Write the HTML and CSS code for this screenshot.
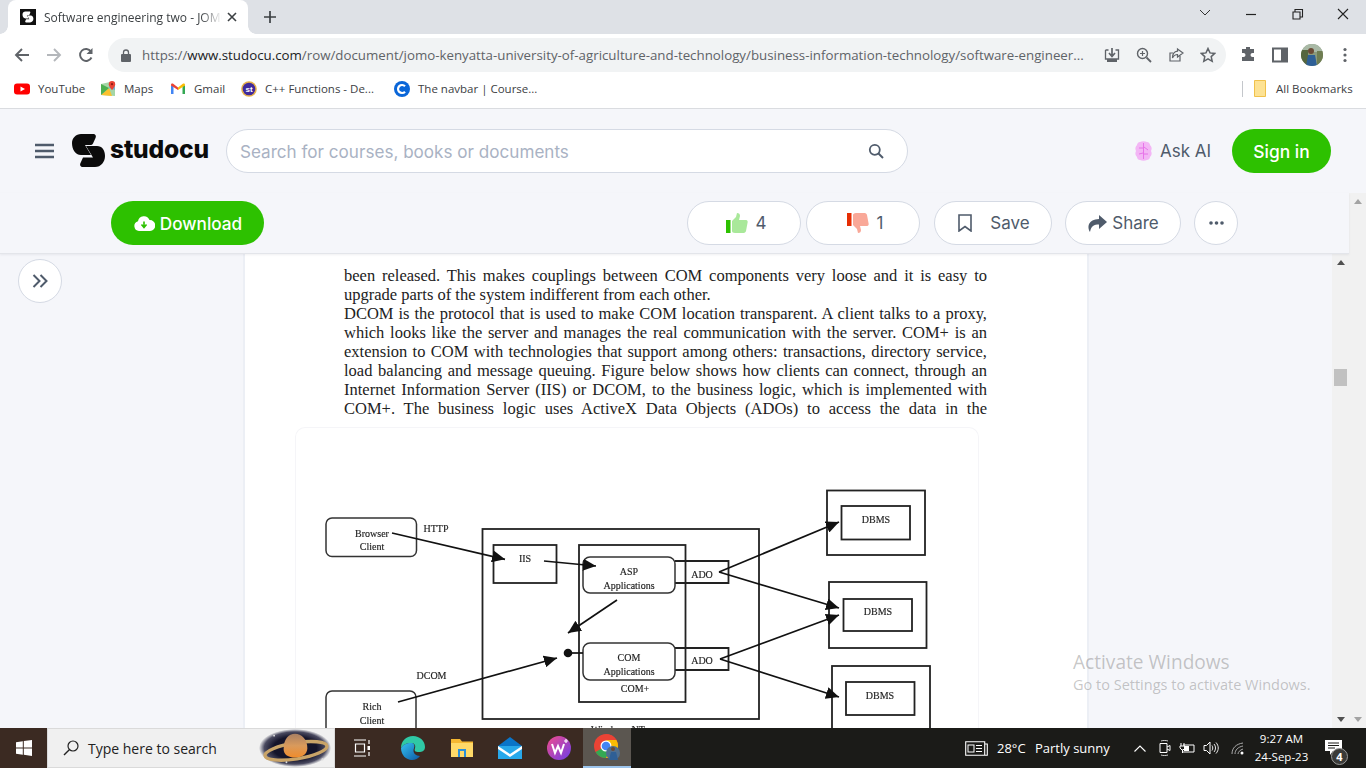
FILE: index.html
```html
<!DOCTYPE html>
<html lang="en">
<head>
<meta charset="utf-8">
<title>Software engineering two</title>
<link rel="stylesheet" href="styles.css">
</head>
<body>
<div class="screen">
  <div class="tabstrip">
    <div class="tab">
      <svg class="favicon" viewBox="0 0 16 16"><rect width="16" height="16" fill="#111"/><g transform="translate(2.500 2.500) scale(.33)"><path d="M9 0h12c2.500 0 3.500 2 2.500 4L21 9.500c-.6 1-1.500 1.500-3 1.500h-5l6 10H9C3 21 0 15 0 9c0-5 4-9 9-9z" fill="#fff"/><path d="M14 12h11c5 0 8 4 8 10 0 6-4 11-10 11H11c-2.500 0-3.500-2-2.500-4l2.500-5.500h10z" fill="#fff"/></g></svg>
      <span class="tab-title">Software engineering two - JOMO Kenyatta</span>
      <svg class="tab-x" viewBox="0 0 10 10"><path d="M1 1l8 8M9 1l-8 8" stroke="#3c4043" stroke-width="1.6"/></svg>
    </div>
    <svg class="newtab" viewBox="0 0 12 12"><path d="M6 0v12M0 6h12" stroke="#3c4043" stroke-width="1.7"/></svg>
    <div class="wincontrols">
      <svg class="winbtn" viewBox="0 0 46 28"><path d="M18 10l5 5 5-5" fill="none" stroke="#333" stroke-width="1"/></svg>
      <svg class="winbtn" viewBox="0 0 46 28"><path d="M18 14.5h10" stroke="#222" stroke-width="1.2"/></svg>
      <svg class="winbtn" viewBox="0 0 46 28"><path d="M19 12h7v7h-7zM21 12V9.500h7.500V17H26" fill="none" stroke="#222" stroke-width="1.1"/></svg>
      <svg class="winbtn" viewBox="0 0 46 28"><path d="M18 9l10 10M28 9L18 19" stroke="#222" stroke-width="1.1"/></svg>
    </div>
  </div>

  <div class="toolbar">
    <svg class="navicon" viewBox="0 0 16 16"><path d="M15 8H2M8 2L2 8l6 6" fill="none" stroke="#5f6368" stroke-width="1.9"/></svg>
    <svg class="navicon" viewBox="0 0 16 16"><path d="M1 8h13M8 2l6 6-6 6" fill="none" stroke="#b4b7bb" stroke-width="1.9"/></svg>
    <svg class="navicon" viewBox="0 0 16 16"><path d="M13.500 10.500A6 6 0 1 1 13 4.500" fill="none" stroke="#5f6368" stroke-width="1.9"/><path d="M14.500 1v6h-6z" fill="#5f6368"/></svg>
    <div class="omnibox">
      <svg class="lock" viewBox="0 0 10 13"><path d="M2.500 5V3.500a2.500 2.500 0 0 1 5 0V5" fill="none" stroke="#5f6368" stroke-width="1.300"/><rect y="5" width="10" height="8" rx="1" fill="#5f6368"/></svg>
      <span class="url">https://<b>www.studocu.com</b>/row/document/jomo-kenyatta-university-of-agriculture-and-technology/business-information-technology/software-engineer...</span>
      <svg class="omni-icon" viewBox="0 0 16 16"><path d="M1.500 3v9h13V3h-3M4.500 3h-3" fill="none" stroke="#5f6368" stroke-width="1.300"/><path d="M8 1v7M5 6l3 3.500L11 6" fill="none" stroke="#5f6368" stroke-width="1.700"/><rect x="3" y="12" width="10" height="3" fill="#5f6368"/></svg>
      <svg class="omni-icon" viewBox="0 0 16 16"><circle cx="6.500" cy="6.500" r="5" fill="none" stroke="#5f6368" stroke-width="1.400"/><path d="M10.500 10.500L15 15" stroke="#5f6368" stroke-width="1.800"/><path d="M6.500 4v5M4 6.500h5" stroke="#5f6368" stroke-width="1.200"/></svg>
      <svg class="omni-icon" viewBox="0 0 16 16"><path d="M12 9v5H2V6h3" fill="none" stroke="#5f6368" stroke-width="1.200"/><path d="M9.500 2L15 6l-5.500 4V7.500C7 7.500 5.500 9 4.500 11c0-4 2-6.500 5-6.800z" fill="none" stroke="#5f6368" stroke-width="1.200"/></svg>
      <svg class="omni-icon" viewBox="0 0 16 16"><path d="M8 1.500l2 4.400 4.800.5-3.600 3.200 1 4.700L8 11.900l-4.200 2.400 1-4.700L1.200 6.400 6 5.900z" fill="none" stroke="#5f6368" stroke-width="1.500"/></svg>
    </div>
    <div class="toolbar-right">
      <svg class="tool-icon" viewBox="0 0 16 16"><path d="M6 1.500a2 2 0 0 1 4 0V3h4v4h-1.500a2 2 0 0 0 0 4H14v4H2v-4h1.500a2 2 0 0 0 0-4H2V3h4z" fill="#5f6368" transform="translate(0 -1)"/></svg>
      <svg class="tool-icon" viewBox="0 0 16 16"><path d="M1 1.500h14v13H1z" fill="none" stroke="#5f6368" stroke-width="2"/><rect x="9" y="2" width="6" height="12" fill="#5f6368"/></svg>
      <svg class="avatar" viewBox="0 0 22 22"><defs><clipPath id="av"><circle cx="11" cy="11" r="11"/></clipPath></defs><g clip-path="url(#av)"><rect width="22" height="22" fill="#8b9a7c"/><rect y="0" width="22" height="8" fill="#a9b9a6"/><rect x="0" y="6" width="7" height="16" fill="#55663f"/><rect x="16" y="7" width="6" height="15" fill="#6f7d52"/><circle cx="10" cy="7" r="3" fill="#6b4a36"/><path d="M5 22l2-11h7l2 11z" fill="#2e5f96"/></g></svg>
      <svg class="tool-icon" viewBox="0 0 16 16"><circle cx="8" cy="2.500" r="1.600" fill="#5f6368"/><circle cx="8" cy="8" r="1.600" fill="#5f6368"/><circle cx="8" cy="13.500" r="1.600" fill="#5f6368"/></svg>
    </div>
  </div>

  <div class="bookmarks">
    <a class="bm bm-yt"><svg class="bm-icon" viewBox="0 0 16 16"><rect y="2.500" width="16" height="11" rx="3" fill="#f00"/><path d="M6.500 5.500v5L11 8z" fill="#fff"/></svg>YouTube</a>
    <a class="bm bm-maps"><svg class="bm-icon" viewBox="0 0 16 16"><path d="M1 3l9-2 5 2v12l-14-1z" fill="#a5d6a7"/><path d="M1 14L9 7l3 8z" fill="#fbc02d"/><path d="M1 3l8 4-8 7z" fill="#4caf50"/><path d="M9 7l2-6 4 2v6z" fill="#4285f4" opacity=".5"/><path d="M12 0a3.200 3.200 0 0 1 3.200 3.200C15.200 5.500 12 9 12 9S8.800 5.500 8.800 3.200A3.200 3.200 0 0 1 12 0z" fill="#ea4335"/><circle cx="12" cy="3.200" r="1.100" fill="#8e1c14"/></svg>Maps</a>
    <a class="bm bm-gmail"><svg class="bm-icon" viewBox="0 0 16 16"><path d="M1 13V4l2.500 1.500V13z" fill="#4285f4"/><path d="M15 13V4l-2.500 1.500V13z" fill="#34a853"/><path d="M1 4c0-1.500 1.500-1.800 2.500-1L8 6.500 8 9 1 4.500z" fill="#ea4335"/><path d="M15 4c0-1.500-1.500-1.800-2.500-1L8 6.500V9l7-4.500z" fill="#fbbc04"/></svg>Gmail</a>
    <a class="bm bm-st"><svg class="bm-icon" viewBox="0 0 16 16"><circle cx="8" cy="8" r="7.800" fill="#e5b04a"/><circle cx="8" cy="8" r="6.300" fill="#3f2a9c"/><text x="8" y="11" class="st-text">st</text></svg>C++ Functions - De...</a>
    <a class="bm bm-c"><svg class="bm-icon" viewBox="0 0 16 16"><circle cx="8" cy="8" r="8" fill="#0a66d8"/><path d="M11 5.300A4 4 0 1 0 11 10.700" fill="none" stroke="#fff" stroke-width="2.200"/></svg>The navbar | Course...</a>
    <span class="bm-sep"></span>
    <a class="bm bm-all"><svg class="bm-folder" viewBox="0 0 12 17"><path d="M.5.500h11v16H.5z" fill="#fde293" stroke="#f0c14b"/></svg>All Bookmarks</a>
  </div>

  <div class="site">
    <header class="topnav">
      <svg class="burger" viewBox="0 0 19 16"><path d="M0 2h19M0 8h19M0 14h19" stroke="#4f5b6b" stroke-width="2.600"/></svg>
      <svg class="logo-mark" viewBox="0 0 33 33"><path d="M9 0h12c2.500 0 3.500 2 2.500 4L21 9.500c-.6 1-1.500 1.500-3 1.500h-5l6 10H9C3 21 0 15 0 9c0-5 4-9 9-9z" fill="#0b0b0b"/><path d="M14 12h11c5 0 8 4 8 10 0 6-4 11-10 11H11c-2.500 0-3.500-2-2.500-4l2.500-5.500h10z" fill="#0b0b0b"/></svg>
      <span class="logo-word">studocu</span>
      <div class="search">
        <span class="search-ph">Search for courses, books or documents</span>
        <svg class="search-ico" viewBox="0 0 16 16"><circle cx="6.800" cy="6.800" r="5" fill="none" stroke="#4f5b6b" stroke-width="1.800"/><path d="M10.500 10.500L15 15" stroke="#4f5b6b" stroke-width="2"/></svg>
      </div>
      <svg class="askai-ico" viewBox="0 0 17 20"><path d="M5 1c2-1 5-1 7 0 2 0 3 2 3 3 2 2 2 4 1 6 1 2 1 4-1 6 0 2-2 3-3 3-2 1-5 1-7 0-2 0-3-2-3-3-2-2-2-4-1-6-1-2-1-4 1-6 0-1 1-3 3-3z" fill="#f3b6f5"/><path d="M8.500 2v16M4 7h4M9 6l4 3M4 13l4-1M9 13h4" stroke="#e56ce8" stroke-width=".9" fill="none"/></svg>
      <span class="askai">Ask AI</span>
      <a class="signin">Sign in</a>
    </header>

    <div class="below">
      <div class="main">
        <div class="actionbar">
          <a class="download">
            <svg class="dl-ico" viewBox="0 0 22 15"><path d="M6 15a5 5 0 0 1-1-9.800A6 6 0 0 1 16.500 4 5.500 5.500 0 0 1 17 15z" fill="#fff"/><path d="M11 5.500v5M8.500 8.500L11 11.500l2.500-3" fill="none" stroke="#2dc100" stroke-width="1.600"/></svg>
            Download
          </a>
          <div class="actions">
            <a class="pill pill-vote">
              <svg class="vote-ico" viewBox="0 0 22 20"><rect x="0" y="7" width="4.500" height="13" fill="#2dc100"/><path d="M6 8l4-4 1-4c2 0 3 1 3 3l-1 4h7c1.500 0 2 1.500 1.500 3L20 18c-.5 1.500-1.500 2-3 2H9c-2 0-3-1-3-2z" fill="#a9e89a"/></svg>
              <span>4</span>
            </a>
            <a class="pill pill-vote">
              <svg class="vote-ico" viewBox="0 0 22 20"><rect x="0" y="0" width="4.500" height="13" fill="#e62e04"/><path d="M6 12l4 4 1 4c2 0 3-1 3-3l-1-4h7c1.500 0 2-1.500 1.500-3L20 2c-.5-1.500-1.500-2-3-2H9C7 0 6 1 6 2z" fill="#f9a898"/></svg>
              <span>1</span>
            </a>
            <a class="pill pill-save">
              <svg class="save-ico" viewBox="0 0 14 18"><path d="M1 1h12v16l-6-4.500L1 17z" fill="none" stroke="#4f5b6b" stroke-width="1.600"/></svg>
              <span>Save</span>
            </a>
            <a class="pill pill-share">
              <svg class="share-ico" viewBox="0 0 20 17"><path d="M12 0l8 7-8 7V9.500C7 9.500 4 11 3 17 0 12 1 4.500 12 4z" fill="#4f5b6b"/></svg>
              <span>Share</span>
            </a>
            <a class="pill pill-more"><svg class="more-ico" viewBox="0 0 15 4"><circle cx="2" cy="2" r="1.800" fill="#4f5b6b"/><circle cx="7.500" cy="2" r="1.800" fill="#4f5b6b"/><circle cx="13" cy="2" r="1.800" fill="#4f5b6b"/></svg></a>
          </div>
        </div>

        <div class="viewer">
          <aside class="side">
            <a class="expand"><svg class="expand-ico" viewBox="0 0 16 14"><path d="M1.500 1l6 6-6 6M8.500 1l6 6-6 6" fill="none" stroke="#4f5b6b" stroke-width="2"/></svg></a>
          </aside>
          <article class="page">
            <div class="doc">
              <p class="ln">been released. This makes couplings between COM components very loose and it is easy to</p>
              <p class="ln ln-end">upgrade parts of the system indifferent from each other.</p>
              <p class="ln">DCOM is the protocol that is used to make COM location transparent. A client talks to a proxy,</p>
              <p class="ln">which looks like the server and manages the real communication with the server. COM+ is an</p>
              <p class="ln">extension to COM with technologies that support among others: transactions, directory service,</p>
              <p class="ln">load balancing and message queuing. Figure below shows how clients can connect, through an</p>
              <p class="ln">Internet Information Server (IIS) or DCOM, to the business logic, which is implemented with</p>
              <p class="ln">COM+. The business logic uses ActiveX Data Objects (ADOs) to access the data in the</p>
            </div>
            <figure class="figure">
              <svg class="diagram" viewBox="295 427 684 310">
                <defs>
                  <marker id="ah" markerUnits="userSpaceOnUse" markerWidth="13" markerHeight="12" refX="13" refY="6" orient="auto"><path d="M0 0L13 6 0 12z" fill="#111"/></marker>
                </defs>
                <g class="box">
                  <rect class="soft" x="326" y="518" width="90.500" height="38.500" rx="6"/>
                  <rect class="soft" x="326" y="691" width="90" height="45" rx="6"/>
                  <rect x="482.500" y="529" width="276.500" height="190"/>
                  <rect x="493.500" y="545" width="63" height="38"/>
                  <rect x="579" y="545" width="106.500" height="157"/>
                  <path d="M675 561h53.500v22H675M675 648h53.500v22H675"/>
                  <rect class="soft" x="583" y="557" width="92" height="36" rx="7"/>
                  <rect class="soft" x="583" y="643" width="92" height="37" rx="7"/>
                  <rect x="827" y="490.500" width="98" height="64.500"/>
                  <rect x="841.500" y="506" width="68.500" height="33.500"/>
                  <rect x="829" y="582" width="97.500" height="66"/>
                  <rect x="843.500" y="599" width="68.500" height="32"/>
                  <rect x="832" y="666" width="98" height="80"/>
                  <rect x="846" y="682" width="68.500" height="33"/>
                </g>
                <g class="arrow">
                  <path d="M392 533L505 559.300" marker-end="url(#ah)"/>
                  <path d="M544 561L596 566" marker-end="url(#ah)"/>
                  <path d="M617 600L568 633" marker-end="url(#ah)"/>
                  <path d="M398 702L557 658" marker-end="url(#ah)"/>
                  <path d="M719 572L839 522" marker-end="url(#ah)"/>
                  <path d="M719 572L839 608" marker-end="url(#ah)"/>
                  <path d="M720 659L839 615" marker-end="url(#ah)"/>
                  <path d="M720 659L839 697" marker-end="url(#ah)"/>
                  <path d="M568 653H583"/>
                </g>
                <circle cx="568" cy="653" r="4.300" fill="#111"/>
                <g class="lbl">
                  <text x="372" y="537">Browser</text>
                  <text x="372" y="550">Client</text>
                  <text x="436" y="532">HTTP</text>
                  <text x="525" y="562">IIS</text>
                  <text x="629" y="575">ASP</text>
                  <text x="629" y="589">Applications</text>
                  <text x="629" y="661">COM</text>
                  <text x="629" y="675">Applications</text>
                  <text x="635" y="692">COM+</text>
                  <text x="702" y="578">ADO</text>
                  <text x="702" y="664">ADO</text>
                  <text x="876" y="523">DBMS</text>
                  <text x="878" y="615">DBMS</text>
                  <text x="880" y="699">DBMS</text>
                  <text x="431.500" y="679">DCOM</text>
                  <text x="372" y="710">Rich</text>
                  <text x="372" y="724">Client</text>
                  <text x="618" y="733">Windows NT</text>
                </g>
              </svg>
            </figure>
          </article>
          <div class="gutter"></div>
          <div class="scroll scroll-inner">
            <i class="sc-up"></i>
            <i class="sc-thumb"></i>
            <i class="sc-down"></i>
          </div>
        </div>
      </div>
      <div class="scroll scroll-outer">
        <i class="sc-up sc-pale"></i>
        <i class="sc-down sc-pale"></i>
      </div>
    </div>
    <div class="activate">
      <div class="act-1">Activate Windows</div>
      <div class="act-2">Go to Settings to activate Windows.</div>
    </div>
  </div>

  <footer class="taskbar">
    <div class="tb-left">
      <div class="start"><svg class="win-logo" viewBox="0 0 16 16"><path d="M0 2.300l6.800-1V7.600H0zM7.800 1.100L16 0v7.600H7.800zM0 8.500h6.800v6.300l-6.800-1zM7.800 8.500H16V16l-8.200-1.200z" fill="#fff"/></svg></div>
      <div class="tb-search">
        <svg class="tb-mag" viewBox="0 0 16 16"><circle cx="10" cy="6" r="5" fill="none" stroke="#222" stroke-width="1.200"/><path d="M6.300 9.700L1 15" stroke="#222" stroke-width="1.400"/></svg>
        <span class="tb-ph">Type here to search</span>
        <svg class="saturn" viewBox="0 0 78 40">
          <defs>
            <radialGradient id="halo"><stop offset=".6" stop-color="#14142a"/><stop offset=".85" stop-color="#4a4a60"/><stop offset="1" stop-color="#f0f0f0"/></radialGradient>
            <linearGradient id="planet" x1="0" y1="0" x2="0" y2="1"><stop offset="0" stop-color="#a87f63"/><stop offset=".5" stop-color="#d99a5c"/><stop offset="1" stop-color="#f08c2c"/></linearGradient>
          </defs>
          <ellipse cx="39" cy="20" rx="38" ry="20" fill="url(#halo)"/>
          <ellipse cx="40" cy="23" rx="33" ry="8.500" fill="none" stroke="#c9a468" stroke-width="3.500" transform="rotate(-9 40 23)"/>
          <path d="M27 21c0-10 5-16 12-16s13 6 13 15c0 7-6 10-13 10s-12-3-12-9z" fill="url(#planet)"/>
          <circle cx="17" cy="7" r="1" fill="#ddd"/><circle cx="68" cy="32" r="1.200" fill="#ddd"/><circle cx="30" cy="35" r="1" fill="#ddd"/>
        </svg>
      </div>
      <div class="tb-apps">
        <svg class="tb-tv" viewBox="0 0 17 18"><path d="M1 1h12M1 17h12M2.500 5h9v8h-9z" fill="none" stroke="#fff" stroke-width="1.200"/><path d="M16 1v4M16 13v4" stroke="#fff" stroke-width="1.200"/><rect x="14.500" y="7" width="2.500" height="4" fill="#fff"/></svg>
        <svg class="tb-app" viewBox="0 0 24 24"><defs><linearGradient id="edge" x1="0" y1="0" x2="1" y2="1"><stop offset="0" stop-color="#35c1f1"/><stop offset="1" stop-color="#0c59a4"/></linearGradient></defs><path d="M12 0c7 0 12 5 12 11 0 4-3 5-6 5-4 0-5-1-4-4 1-3-1-5-4-5C5 7 2 9 0 12 0 5 5 0 12 0z" fill="#2fc8a5"/><path d="M0 12c2-3 5-5 10-5 3 0 4 2 3 5-2 5 2 8 6 8-2 2.500-4.500 4-8 4C5 24 0 19 0 12z" fill="url(#edge)"/></svg>
        <svg class="tb-app" viewBox="0 0 24 24"><path d="M1 3h9l2 2.500h11V21H1z" fill="#f5b731"/><path d="M1 7h22v14H1z" fill="#ffd968"/><rect x="8" y="13" width="8" height="8" fill="#2a8fd8"/><rect x="10" y="15" width="4" height="6" fill="#ffd968"/></svg>
        <svg class="tb-app" viewBox="0 0 24 24"><path d="M12 1L24 10v13H0V10z" fill="#0a75c9"/><path d="M0 10h24v13H0z" fill="#28a8ea"/><path d="M0 10l12 8 12-8v3l-12 8L0 13z" fill="#fff"/></svg>
        <svg class="tb-app" viewBox="0 0 24 24"><defs><linearGradient id="wps" x1="0" y1="0" x2="1" y2="1"><stop offset="0" stop-color="#f24c8c"/><stop offset="1" stop-color="#6c3de8"/></linearGradient></defs><circle cx="12" cy="12" r="12" fill="url(#wps)"/><path d="M5 8l3 9 3-7 3 7 3-9" fill="none" stroke="#fff" stroke-width="2"/><path d="M19 3v4M17 5h4" stroke="#fff" stroke-width="1.200"/></svg>
        <div class="tb-chrome">
          <svg class="tb-app" viewBox="0 0 26 26"><circle cx="12" cy="12" r="12" fill="#ea4335"/><path d="M12 12L1.600 18A12 12 0 0 0 12 24L18 12z" fill="#34a853"/><path d="M12 0a12 12 0 0 1 10.400 6H12z" fill="#ea4335"/><path d="M12 24A12 12 0 0 0 22.400 6H12l6 6z" fill="#fbbc04"/><circle cx="12" cy="12" r="5.500" fill="#fff"/><circle cx="12" cy="12" r="4.300" fill="#4285f4"/><circle cx="19" cy="19" r="7" fill="#4f6e8f"/><path d="M15 26l2-8h5l2 8z" fill="#2e5f96"/><circle cx="19" cy="15" r="2" fill="#6b4a36"/></svg>
        </div>
      </div>
    </div>
    <div class="tb-right">
      <svg class="tb-news" viewBox="0 0 23 15"><path d="M.7.700h19v13.600H.700zM20 3h2.300v11.300H17" fill="none" stroke="#fff" stroke-width="1.100"/><rect x="3" y="4" width="6" height="7" fill="none" stroke="#fff"/><path d="M11 4.500h6M11 7.500h6M11 10.500h6" stroke="#fff"/></svg>
      <span class="tb-temp">28°C</span>
      <span class="tb-weather">Partly sunny</span>
      <svg class="tray tray-chev" viewBox="0 0 12 7"><path d="M.5 6.500L6 1l5.500 5.500" fill="none" stroke="#fff" stroke-width="1.100"/></svg>
      <svg class="tray tray-meet" viewBox="0 0 12 16"><path d="M1 3.500h7v9H1zM8 7l3-1.500v5L8 9" fill="none" stroke="#fff"/><path d="M2 1c2-.7 5-.7 7 0M2 15c2 .7 5 .7 7 0" fill="none" stroke="#fff" stroke-width=".8"/></svg>
      <svg class="tray tray-batt" viewBox="0 0 16 12"><path d="M4 3h11v7H4" fill="none" stroke="#fff"/><rect x="5" y="4" width="5" height="5" fill="#fff"/><path d="M2 1v3M5 1v3M1 4h5v2L4 8H3L1 6zM3.500 8v3" fill="none" stroke="#fff"/></svg>
      <svg class="tray tray-vol" viewBox="0 0 16 14"><path d="M1 4.500h2.500L7 1v12L3.500 9.500H1z" fill="none" stroke="#fff"/><path d="M9 4.500c1 1.500 1 3.500 0 5M11 3c2 2.500 2 5.500 0 8M13 1.500c3 3.500 3 7.500 0 11" fill="none" stroke="#fff" stroke-width=".9"/></svg>
      <svg class="tray tray-wifi" viewBox="0 0 13 13"><path d="M1 12C1 6 5 2 12 1M4 12c0-4 3-7 8-8M7 12c0-2 2-4 5-5" fill="none" stroke="#aaa" stroke-width="1"/><circle cx="11" cy="11" r="1.500" fill="#fff"/></svg>
      <div class="tb-clock"><span>9:27 AM</span><span>24-Sep-23</span></div>
      <div class="tb-notif">
        <svg class="notif-ico" viewBox="0 0 17 15"><path d="M0 0h17v11H8l-3 4v-4H0z" fill="#fff"/><path d="M3 3h11M3 5.500h11M3 8h7" stroke="#1b1b18"/></svg>
        <span class="notif-badge">4</span>
      </div>
    </div>
  </footer>
</div>
</body>
</html>
```

FILE: styles.css
```css
* { box-sizing: border-box; }
html, body { margin: 0; padding: 0; }
a { color: inherit; text-decoration: none; }
p { margin: 0; }
svg { display: block; flex: none; }
body { font-family: "Open Sans", "Noto Sans", sans-serif; background: #fff; }

.screen { width: 1366px; height: 768px; overflow: hidden; display: flex; flex-direction: column; position: relative; }

/* tab strip */
.tabstrip { height: 34px; flex: none; background: #dee1e6; display: flex; align-items: flex-end; padding-left: 8px; }
.tab { width: 240px; height: 34px; background: #fff; border-radius: 8px 8px 0 0; display: flex; align-items: center; padding: 0 11px 0 12px; position: relative; }
.tab::before, .tab::after { content: ""; position: absolute; bottom: 0; width: 8px; height: 8px; }
.tab::before { left: -8px; background: radial-gradient(circle at 0 0, transparent 7.500px, #fff 8px); }
.tab::after { right: -8px; background: radial-gradient(circle at 100% 0, transparent 7.500px, #fff 8px); }
.favicon { width: 16px; height: 16px; }
.tab-title { margin-left: 8px; width: 178px; white-space: nowrap; overflow: hidden; font-size: 12px; color: #3c4043; -webkit-mask-image: linear-gradient(90deg, #000 88%, transparent); mask-image: linear-gradient(90deg, #000 88%, transparent); }
.tab-x { width: 10px; height: 10px; margin-left: 5px; }
.newtab { width: 12px; height: 12px; margin: 0 0 11px 16px; }
.wincontrols { display: flex; margin-left: auto; align-self: flex-start; }
.winbtn { width: 46px; height: 28px; }

/* toolbar */
.toolbar { height: 38px; flex: none; background: #fff; display: flex; align-items: center; padding: 4px 0 0 14px; }
.navicon { width: 16px; height: 16px; margin-right: 16px; }
.omnibox { width: 1118px; height: 34px; margin-left: -2px; background: #f1f3f4; border-radius: 17px; display: flex; align-items: center; padding-left: 13px; padding-right: 10px; }
.lock { width: 10px; height: 13px; }
.url { margin-left: 11px; width: 951px; font-size: 13.300px; color: #5f6368; white-space: nowrap; overflow: hidden; }
.url b { font-weight: 400; color: #202124; }
.omni-icon { width: 16px; height: 16px; margin-left: 16px; }
.omni-icon:first-of-type { margin-left: 10px; }
.toolbar-right { display: flex; align-items: center; margin-left: 14px; }
.tool-icon { width: 16px; height: 16px; margin-right: 16px; }
.avatar { width: 22px; height: 22px; margin: 0 14px 0 -3px; }

/* bookmarks */
.bookmarks { height: 37px; flex: none; background: #fff; border-bottom: 1px solid #dadce0; display: flex; align-items: center; padding-bottom: 3px; font-size: 11.500px; color: #3c4043; }
.bm { display: flex; align-items: center; white-space: nowrap; }
.bm-icon { width: 16px; height: 16px; margin-right: 8px; }
.bm-yt { margin-left: 14px; width: 86px; }
.bm-maps { width: 70px; }
.bm-gmail { width: 71px; }
.bm-st { width: 153px; }
.bm-c { width: 200px; }
.bm-sep { width: 1px; height: 16px; background: #c4c7cb; margin-left: 648px; }
.bm-all { margin-left: 11px; }
.bm-folder { width: 12px; height: 17px; margin-right: 10px; }
.st-text { font: 700 8px "Liberation Sans", sans-serif; fill: #fff; text-anchor: middle; }

/* site header */
.site { flex: 1; min-height: 0; display: flex; flex-direction: column; background: #f5f6fa; position: relative; color: #4f5b6b; font-family: Inter, "Noto Sans", sans-serif; }
.topnav { height: 84px; flex: none; display: flex; align-items: flex-start; padding-left: 35px; padding-top: 20px; }
.burger { width: 19px; height: 16px; margin-top: 14px; }
.logo-mark { width: 33px; height: 33px; margin: 5px 0 0 18px; }
.logo-word { margin: 2px 0 0 5px; font-size: 24.600px; line-height: 36px; font-weight: 800; color: #0b0b0b; width: 116px; letter-spacing: -.2px; }
.search { width: 682px; height: 44px; background: #fff; border: 1px solid #d5dae4; border-radius: 22px; display: flex; align-items: center; padding: 0 23px 0 13px; justify-content: space-between; }
.search-ph { font-size: 17.100px; color: #a9b2c3; }
.search-ico { width: 16px; height: 16px; }
.askai-ico { width: 17px; height: 20px; margin: 12px 0 0 227px; }
.askai { margin-left: 8px; font-size: 17px; line-height: 44px; width: 72px; }
.signin { width: 99px; height: 44px; border-radius: 22px; background: #2dc100; color: #fff; font-size: 17.400px; font-weight: 500; display: flex; align-items: center; justify-content: center; }

.below { flex: 1; min-height: 0; display: flex; }
.main { flex: 1; min-width: 0; display: flex; flex-direction: column; }
.actionbar { height: 61px; flex: none; display: flex; padding: 8px 0 0 111px; border-bottom: 1px solid #e3e5ea; box-shadow: 0 1px 2px rgba(60, 70, 90, .08); position: relative; z-index: 2; background: #f5f6fa; }
.download { width: 153px; height: 44px; border-radius: 22px; background: #2dc100; color: #fff; font-size: 17.200px; font-weight: 500; display: flex; align-items: center; justify-content: center; gap: 5px; }
.dl-ico { width: 22px; height: 15px; }
.actions { display: flex; margin-left: 423px; }
.pill { height: 44px; border: 1px solid #d5dae4; border-radius: 22px; background: #fff; display: flex; align-items: center; justify-content: center; font-size: 17px; }
.pill-vote { width: 114px; gap: 7px; margin-right: 5px; padding-left: 3px; }
.pill-save { width: 118px; gap: 18px; margin-left: 9px; padding-left: 2px; }
.pill-share { width: 116px; gap: 5px; margin-left: 13px; }
.pill-more { width: 44px; margin-left: 13px; }
.vote-ico { width: 24px; height: 20px; }
.save-ico { width: 14px; height: 18px; }
.share-ico { width: 20px; height: 17px; }
.more-ico { width: 15px; height: 4px; }

/* viewer */
.viewer { flex: 1; min-height: 0; display: flex; overflow: hidden; }
.side { width: 243px; flex: none; padding: 5px 0 0 18px; }
.expand { width: 44px; height: 44px; border-radius: 50%; border: 1px solid #d5dae4; background: #fff; display: flex; align-items: center; justify-content: center; }
.expand-ico { width: 16px; height: 14px; }
.page { width: 846px; flex: none; background: #fff; border-left: 2px solid #eceff5; border-right: 2px solid #eceff5; padding: 13px 0 0 99px; }
.doc { width: 643px; font-family: "Liberation Serif", serif; font-size: 16.500px; line-height: 18.950px; color: #222; }
.ln { text-align: justify; text-align-last: justify; }
.ln-end { text-align-last: left; }
.figure { margin: 8.400px 0 0 -49px; width: 684px; height: 400px; border: 1px solid #f5f5f8; border-bottom: 0; border-radius: 10px 10px 0 0; position: relative; }
.diagram { width: 684px; height: 310px; margin: -1px 0 0 -1px; filter: blur(.3px); }
.box rect, .box path { fill: none; stroke: #222; stroke-width: 1.800; }
.box .soft { stroke: #333; stroke-width: 1.500; }
.arrow path { fill: none; stroke: #111; stroke-width: 1.700; }
.lbl text { font-family: "Liberation Serif", serif; font-size: 10px; fill: #222; stroke: #222; stroke-width: .15; text-anchor: middle; }
.gutter { flex: 1; }
.scroll { width: 17px; flex: none; background: #f1f1f1; position: relative; display: flex; flex-direction: column; align-items: center; }
.sc-up { width: 0; height: 0; border: 4px solid transparent; border-top: 0; border-bottom: 5px solid #505050; margin-top: 6px; }
.sc-down { width: 0; height: 0; border: 4px solid transparent; border-bottom: 0; border-top: 5px solid #505050; margin-top: auto; margin-bottom: 6px; }
.sc-pale.sc-up { border-bottom-color: #a3a3a3; }
.sc-pale.sc-down { border-top-color: #a3a3a3; }
.sc-thumb { width: 13px; height: 17px; background: #c1c1c1; margin-top: 104px; }

.activate { position: absolute; left: 1073px; top: 541px; color: rgba(120, 120, 120, .42); font-family: "Open Sans", "Noto Sans", sans-serif; white-space: nowrap; pointer-events: none; }
.act-1 { font-size: 19.100px; line-height: 24px; }
.act-2 { font-size: 14.500px; line-height: 21px; }

/* taskbar */
.taskbar { height: 40px; flex: none; display: flex; background: #1b1b18; color: #fff; font-family: "Open Sans", "Noto Sans", sans-serif; }
.tb-left { width: 631px; flex: none; display: flex; background: #3b2a22; }
.start { width: 48px; display: flex; align-items: center; justify-content: center; }
.win-logo { width: 16px; height: 16px; }
.tb-search { width: 288px; background: #f0f0f0; border: 1px solid #dadada; display: flex; align-items: center; padding-left: 15px; color: #222; }
.tb-mag { width: 16px; height: 16px; }
.tb-ph { margin-left: 9px; font-size: 14px; width: 170px; white-space: nowrap; }
.saturn { width: 78px; height: 38px; margin-left: -2px; }
.tb-apps { flex: 1; display: flex; align-items: center; padding-left: 18px; }
.tb-tv { width: 17px; height: 18px; margin-right: 31px; }
.tb-app { width: 24px; height: 24px; margin-right: 24.500px; }
.tb-chrome { width: 48px; height: 40px; margin-left: -12px; background: #5b5650; border-bottom: 2px solid #9cc4ec; display: flex; align-items: center; justify-content: center; }
.tb-chrome .tb-app { margin: 0; width: 26px; height: 26px; }
.tb-right { flex: 1; display: flex; align-items: center; padding-left: 334px; font-size: 13px; }
.tb-news { width: 23px; height: 15px; }
.tb-temp { margin-left: 9px; width: 38px; }
.tb-weather { width: 99px; white-space: nowrap; }
.tray-chev { width: 12px; height: 7px; }
.tray-meet { width: 12px; height: 16px; margin-left: 13px; }
.tray-batt { width: 16px; height: 12px; margin-left: 8px; }
.tray-vol { width: 16px; height: 14px; margin-left: 8px; }
.tray-wifi { width: 13px; height: 13px; margin-left: 12px; }
.tb-clock { width: 75px; margin-left: 0; display: flex; flex-direction: column; align-items: center; font-size: 11.500px; line-height: 18px; }
.tb-notif { width: 30px; height: 40px; position: relative; }
.notif-ico { width: 17px; height: 15px; margin: 12px 0 0 6px; }
.notif-badge { position: absolute; left: 12px; top: 20px; width: 17px; height: 17px; border-radius: 50%; background: #3a3a38; border: 1px solid #999; font-size: 11px; line-height: 15px; font-weight: 700; text-align: center; }
```
